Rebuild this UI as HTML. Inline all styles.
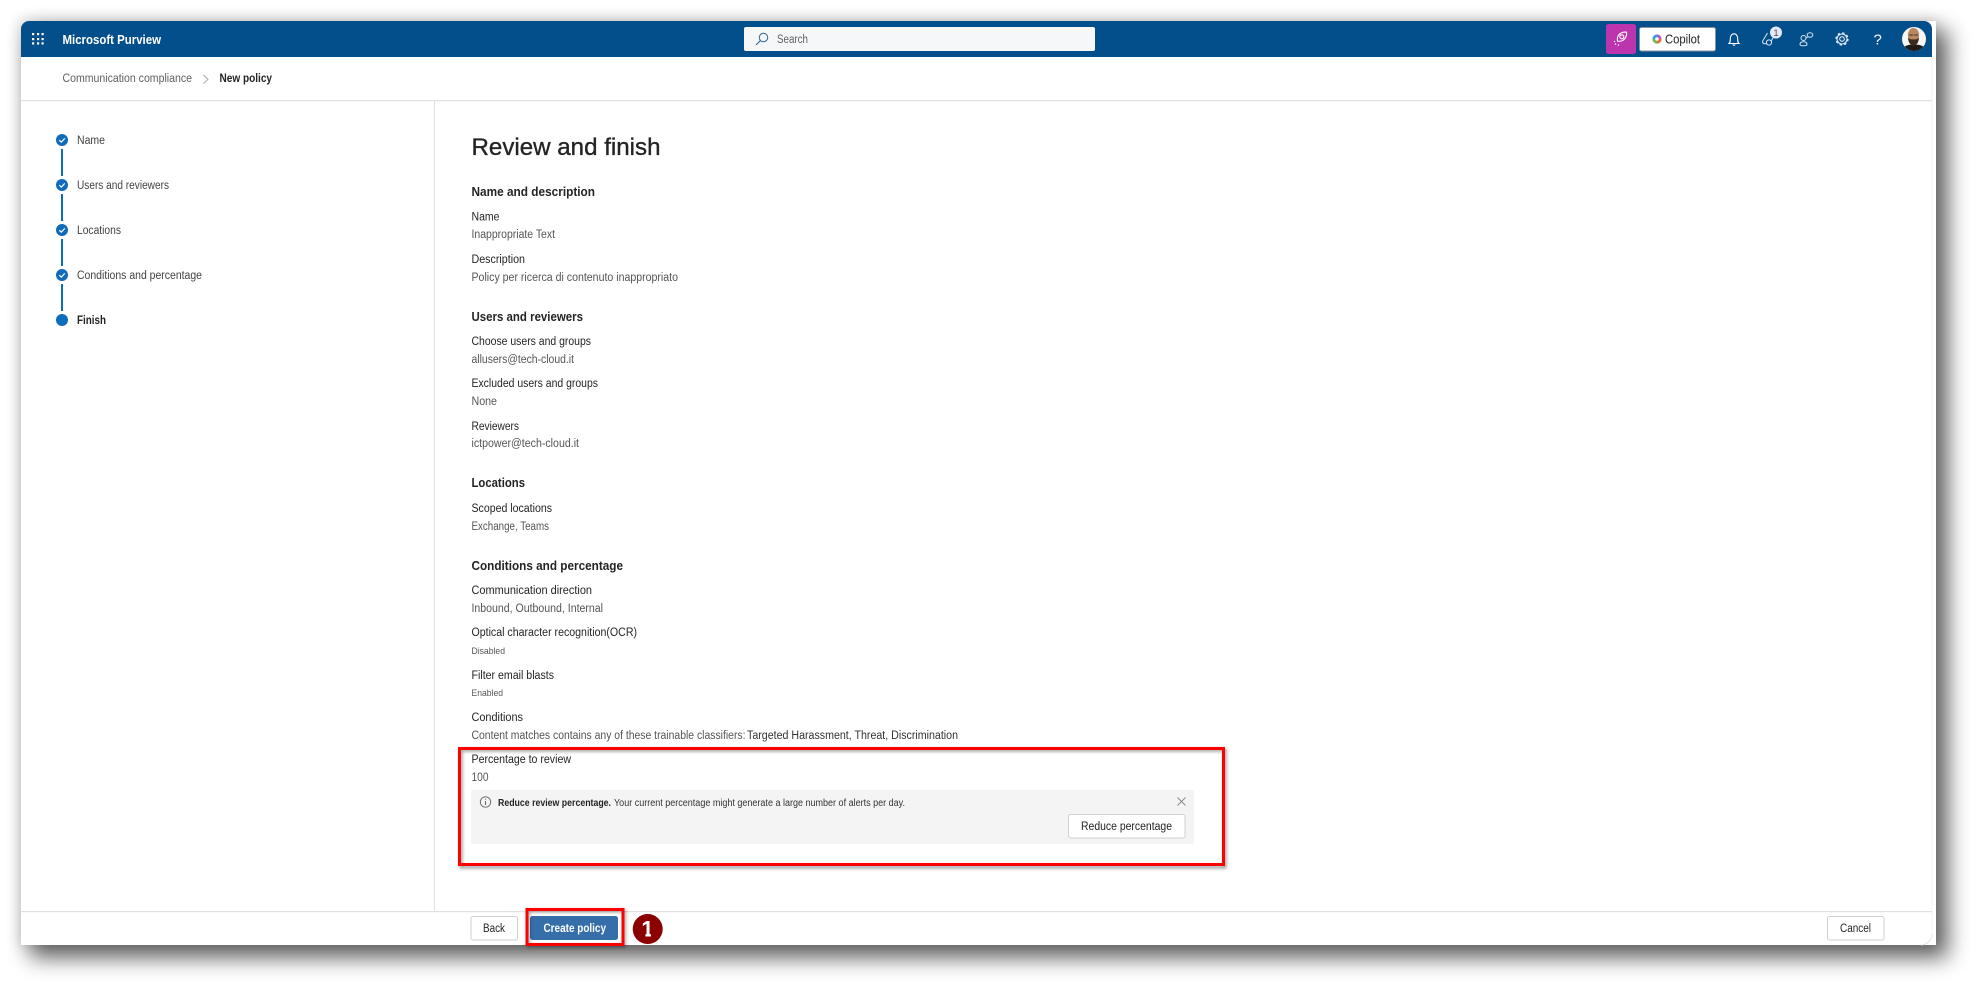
<!DOCTYPE html>
<html lang="en"><head><meta charset="utf-8"><title>Microsoft Purview - New policy</title>
<style>
html,body{margin:0;padding:0;width:1978px;height:988px;overflow:hidden;background:#fff}
svg{position:absolute;left:0;top:0}
text{font-family:"Liberation Sans",sans-serif;font-size:11.5px;fill:#242424}
.v{fill:#555}
.b{font-weight:bold;fill:#242424}
.h{font-weight:bold;font-size:12.5px;fill:#242424}
</style></head><body>
<svg width="1978" height="988" viewBox="0 0 1978 988" xmlns="http://www.w3.org/2000/svg">
<defs>
<filter id="sh" x="-5%" y="-5%" width="110%" height="110%"><feGaussianBlur stdDeviation="11"/></filter>
<filter id="sh2" x="-5%" y="-5%" width="110%" height="110%"><feGaussianBlur stdDeviation="7"/></filter>
<filter id="rs" x="-5%" y="-20%" width="110%" height="140%"><feGaussianBlur stdDeviation="1.6"/></filter>
<clipPath id="av"><circle cx="1914" cy="39" r="12"/></clipPath>
</defs>
<!-- card shadow -->
<rect x="19" y="19" width="1918" height="928" fill="#000" opacity=".12" filter="url(#sh2)"/>
<rect x="30" y="30" width="1918" height="928" fill="#000" opacity=".6" filter="url(#sh)"/>
<!-- card -->
<path d="M21 29a8 8 0 0 1 8-8H1936V945H21Z" fill="#fff"/>
<path d="M1932 934a11 11 0 0 1-11 11" fill="none" stroke="#e4e4e4"/>
<path d="M1932 57V934" stroke="#f1f1f1"/>
<!-- header -->
<path d="M21 57V29a8 8 0 0 1 8-8H1924a8 8 0 0 1 8 8V57Z" fill="#024f8c"/>
<g fill="#fff">
<rect x="32" y="33" width="2.2" height="2.2"/><rect x="37" y="33" width="2.2" height="2.2"/><rect x="41.5" y="33" width="2.2" height="2.2"/>
<rect x="32" y="38" width="2.2" height="2.2"/><rect x="37" y="38" width="2.2" height="2.2"/><rect x="41.5" y="38" width="2.2" height="2.2"/>
<rect x="32" y="42.3" width="2.2" height="2.2"/><rect x="37" y="42.3" width="2.2" height="2.2"/><rect x="41.5" y="42.3" width="2.2" height="2.2"/>
</g>
<text x="62.5" y="44" textLength="98.5" lengthAdjust="spacingAndGlyphs" style="font-weight:bold;font-size:12.5px;fill:#fff">Microsoft Purview</text>
<!-- search -->
<rect x="744" y="27" width="351" height="24" rx="2" fill="#f6f7f8"/>
<circle cx="763.5" cy="37.5" r="4.2" fill="none" stroke="#3f6f9c" stroke-width="1.1"/>
<path d="M760.4 40.6L756 45" stroke="#3f6f9c" stroke-width="1.2"/>
<text x="777" y="43" textLength="31" lengthAdjust="spacingAndGlyphs" style="fill:#616161">Search</text>
<!-- magenta -->
<rect x="1606" y="24" width="30" height="30" rx="2.5" fill="#bd35ae"/>
<g fill="none" stroke="#fff" stroke-width="1.1">
<path d="M1617.5 41c-.9-3 .6-6.5 3.600-8 1.700-.9 4-1.100 5.400-.8.300 1.700-.1 3.700-1 5.400-1.600 3-4.900 4.300-8 3.400Z"/>
<circle cx="1621.800" cy="36.800" r="2"/>
<path d="M1616 43.500l-1.500 1.500M1619 44.500l-1.200 1.200M1615 41l-1 1" stroke-dasharray="1.500 .8"/>
</g>
<!-- copilot -->
<rect x="1639.500" y="27.500" width="76" height="23.500" rx="2" fill="#fff" stroke="#8c9199"/>
<g fill="none" stroke-width="2.800">
<path d="M1653.800 39a3.200 3.200 0 0 1 3.200-3.200" stroke="#2f9fe0"/>
<path d="M1657 35.800a3.200 3.200 0 0 1 3.200 3.200" stroke="#b65ad0"/>
<path d="M1660.200 39a3.200 3.200 0 0 1-3.200 3.200" stroke="#ef6c3b"/>
<path d="M1657 42.200a3.200 3.200 0 0 1-3.200-3.200" stroke="#6fb84a"/>
</g>
<text x="1665" y="43.500" textLength="35" lengthAdjust="spacingAndGlyphs" style="font-size:12.500px;fill:#242424">Copilot</text>
<!-- bell -->
<path d="M1729 43.500c1.300-1.200 1.300-2.500 1.300-4.700 0-3 1.500-5 3.700-5s3.700 2 3.700 5c0 2.200 0 3.500 1.300 4.700Z" fill="none" stroke="#fff" stroke-width="1.100"/>
<path d="M1732.800 44.500a1.300 1.300 0 0 0 2.400 0" fill="none" stroke="#fff"/>
<!-- feedback w badge -->
<path d="M1774 35c-1 3.500-3 7-6 8.500l-4 .200c-1.500-.300-1.800-2-1-3.200l4.500-7.500" fill="none" stroke="#dbe6f2" stroke-width="1"/>
<circle cx="1769" cy="42.500" r="2.600" fill="#024f8c" stroke="#dbe6f2"/>
<circle cx="1776" cy="32.500" r="6" fill="#e3e9f6"/>
<text x="1776" y="36.200" text-anchor="middle" style="font-size:9.500px;fill:#4a4a6a">1</text>
<!-- connect -->
<g fill="none" stroke="#dbe6f2" stroke-width="1">
<circle cx="1803.500" cy="38" r="2.500"/>
<ellipse cx="1810" cy="35" rx="2.800" ry="2.200"/>
<path d="M1800 44.500c0-1.800 1.400-2.700 3.500-2.700s3.500 .9 3.500 2.700c0 1-1.400 1.300-3.500 1.300s-3.500-.3-3.500-1.300Z"/>
<path d="M1806 38l1.800-1"/>
</g>
<!-- gear -->
<circle cx="1842" cy="39" r="2.300" fill="none" stroke="#e6eef6" stroke-width="1.100"/>
<circle cx="1842" cy="39" r="5" fill="none" stroke="#e6eef6" stroke-width="1.100"/>
<circle cx="1842" cy="39" r="6" fill="none" stroke="#e6eef6" stroke-width="1.300" stroke-dasharray="2.360 2.350"/>
<!-- help -->
<text x="1877.700" y="44.500" text-anchor="middle" style="font-size:15px;fill:#fff">?</text>
<!-- avatar -->
<circle cx="1914" cy="39" r="12" fill="#f8f6f3"/>
<g clip-path="url(#av)">
<path d="M1902 52c1-6 5-7.500 12-7.500s11 1.500 12 7.500Z" fill="#1d1a18"/>
<ellipse cx="1913.500" cy="35" rx="5.600" ry="7" fill="#b98660"/>
<path d="M1908 37.500c.2 5 2.500 8 5.500 8s5.300-3 5.500-8c-1 1.500-2.800 2-5.500 2s-4.500-.5-5.500-2Z" fill="#3a2a20"/>
<path d="M1909.500 35h3.300M1914.300 35h3.300" stroke="#2b2b2b" stroke-width="1"/>
</g>
<!-- breadcrumb -->
<text x="62.500" y="82" textLength="129.500" lengthAdjust="spacingAndGlyphs" style="fill:#616161">Communication compliance</text>
<path d="M203.500 75l4.500 4.300-4.500 4.300" fill="none" stroke="#a8a8a8"/>
<text x="219.500" y="82" textLength="52.500" lengthAdjust="spacingAndGlyphs" class="b">New policy</text>
<rect x="21" y="100" width="1911" height="1.200" fill="#e1e1e1"/>
<rect x="434" y="100" width="1" height="811" fill="#e1e1e1"/>
<rect x="21" y="911" width="1911" height="1.200" fill="#e1e1e1"/>
<!-- stepper -->
<g fill="#0f6cbd">
<rect x="61" y="149" width="2" height="27"/><rect x="61" y="194" width="2" height="27"/><rect x="61" y="239" width="2" height="27"/><rect x="61" y="284" width="2" height="27"/>
<circle cx="62" cy="140" r="6"/><circle cx="62" cy="185" r="6"/><circle cx="62" cy="230" r="6"/><circle cx="62" cy="275" r="6"/><circle cx="62" cy="320" r="6"/>
</g>
<g fill="none" stroke="#fff" stroke-width="1.200">
<path d="M59.300 140.200l2 1.900 3.500-3.700"/><path d="M59.300 185.200l2 1.900 3.500-3.700"/><path d="M59.300 230.200l2 1.900 3.500-3.700"/><path d="M59.300 275.200l2 1.900 3.500-3.700"/>
</g>
<text x="77" y="144" textLength="28" lengthAdjust="spacingAndGlyphs" style="fill:#424242">Name</text>
<text x="77" y="189" textLength="92" lengthAdjust="spacingAndGlyphs" style="fill:#424242">Users and reviewers</text>
<text x="77" y="234" textLength="44" lengthAdjust="spacingAndGlyphs" style="fill:#424242">Locations</text>
<text x="77" y="279" textLength="125" lengthAdjust="spacingAndGlyphs" style="fill:#424242">Conditions and percentage</text>
<text x="77" y="324" textLength="29" lengthAdjust="spacingAndGlyphs" class="b">Finish</text>
<!-- main -->
<text x="471.500" y="155" textLength="189" lengthAdjust="spacingAndGlyphs" style="font-size:24px;fill:#242424;stroke:#242424;stroke-width:.35">Review and finish</text>
<text x="471.500" y="196" textLength="123.500" lengthAdjust="spacingAndGlyphs" class="h">Name and description</text>
<text x="471.500" y="220.500" textLength="28" lengthAdjust="spacingAndGlyphs">Name</text>
<text x="471.500" y="238" textLength="83.500" lengthAdjust="spacingAndGlyphs" class="v">Inappropriate Text</text>
<text x="471.500" y="263" textLength="53.500" lengthAdjust="spacingAndGlyphs">Description</text>
<text x="471.500" y="281" textLength="206.500" lengthAdjust="spacingAndGlyphs" class="v">Policy per ricerca di contenuto inappropriato</text>
<text x="471.500" y="321" textLength="111.500" lengthAdjust="spacingAndGlyphs" class="h">Users and reviewers</text>
<text x="471.500" y="345" textLength="119.500" lengthAdjust="spacingAndGlyphs">Choose users and groups</text>
<text x="471.500" y="363" textLength="102.500" lengthAdjust="spacingAndGlyphs" class="v">allusers@tech-cloud.it</text>
<text x="471.500" y="387" textLength="126.500" lengthAdjust="spacingAndGlyphs">Excluded users and groups</text>
<text x="471.500" y="405" textLength="25.500" lengthAdjust="spacingAndGlyphs" class="v">None</text>
<text x="471.500" y="430" textLength="47.500" lengthAdjust="spacingAndGlyphs">Reviewers</text>
<text x="471.500" y="447" textLength="107.500" lengthAdjust="spacingAndGlyphs" class="v">ictpower@tech-cloud.it</text>
<text x="471.500" y="487" textLength="53.500" lengthAdjust="spacingAndGlyphs" class="h">Locations</text>
<text x="471.500" y="512" textLength="80.500" lengthAdjust="spacingAndGlyphs">Scoped locations</text>
<text x="471.500" y="530" textLength="77.500" lengthAdjust="spacingAndGlyphs" class="v">Exchange, Teams</text>
<text x="471.500" y="570" textLength="151.500" lengthAdjust="spacingAndGlyphs" class="h">Conditions and percentage</text>
<text x="471.500" y="594" textLength="120.500" lengthAdjust="spacingAndGlyphs">Communication direction</text>
<text x="471.500" y="612" textLength="131.500" lengthAdjust="spacingAndGlyphs" class="v">Inbound, Outbound, Internal</text>
<text x="471.500" y="636" textLength="165.500" lengthAdjust="spacingAndGlyphs">Optical character recognition(OCR)</text>
<text x="471.500" y="654" textLength="33.500" lengthAdjust="spacingAndGlyphs" style="font-size:9.500px;fill:#555">Disabled</text>
<text x="471.500" y="679" textLength="82.500" lengthAdjust="spacingAndGlyphs">Filter email blasts</text>
<text x="471.500" y="696" textLength="31.500" lengthAdjust="spacingAndGlyphs" style="font-size:9.500px;fill:#555">Enabled</text>
<text x="471.500" y="721" textLength="51.500" lengthAdjust="spacingAndGlyphs">Conditions</text>
<text x="471.500" y="739" textLength="274" lengthAdjust="spacingAndGlyphs" class="v">Content matches contains any of these trainable classifiers:</text>
<text x="747" y="739" textLength="211" lengthAdjust="spacingAndGlyphs" style="fill:#333">Targeted Harassment, Threat, Discrimination</text>
<text x="471.500" y="763" textLength="99.500" lengthAdjust="spacingAndGlyphs">Percentage to review</text>
<text x="471.500" y="781" textLength="17" lengthAdjust="spacingAndGlyphs" class="v">100</text>
<!-- alert -->
<rect x="471" y="790" width="723" height="54" rx="2" fill="#f4f4f4"/>
<circle cx="485.500" cy="802" r="5.200" fill="none" stroke="#666" stroke-width=".9"/>
<path d="M485.500 801v4M485.500 798.700v1" stroke="#666"/>
<text x="498" y="806" textLength="113" lengthAdjust="spacingAndGlyphs" style="font-weight:bold;font-size:10px;fill:#242424">Reduce review percentage.</text>
<text x="614" y="806" textLength="291" lengthAdjust="spacingAndGlyphs" style="font-size:10px;fill:#333">Your current percentage might generate a large number of alerts per day.</text>
<path d="M1177.500 797.500l8 8M1185.500 797.500l-8 8" stroke="#8a8a8a" fill="none"/>
<rect x="1068.500" y="814.500" width="116.500" height="23.500" rx="2" fill="#fff" stroke="#d1d1d1"/>
<text x="1081" y="830" textLength="91" lengthAdjust="spacingAndGlyphs">Reduce percentage</text>
<!-- red box -->
<rect x="459.500" y="748.500" width="764" height="117" fill="none" stroke="#000" stroke-width="3" opacity=".4" filter="url(#rs)" transform="translate(1.500 1.500)"/>
<rect x="459.500" y="748.500" width="764" height="116" fill="none" stroke="#f00" stroke-width="3"/>
<!-- footer -->
<rect x="471" y="916.500" width="46.500" height="23.500" rx="2" fill="#fff" stroke="#d1d1d1"/>
<text x="483" y="932" textLength="22" lengthAdjust="spacingAndGlyphs">Back</text>
<rect x="530" y="916" width="88" height="24" rx="2.500" fill="#356ea9"/>
<text x="543.500" y="932" textLength="62.500" lengthAdjust="spacingAndGlyphs" style="font-weight:bold;fill:#fff">Create policy</text>
<rect x="527" y="909.500" width="96" height="35" fill="none" stroke="#000" stroke-width="3" opacity=".35" filter="url(#rs)" transform="translate(1.500 1.500)"/>
<rect x="527" y="909.500" width="96" height="35" fill="none" stroke="#f00" stroke-width="3"/>
<circle cx="647.700" cy="929" r="15" fill="#8b0000"/>
<text x="647.500" y="936.500" text-anchor="middle" style="font-weight:bold;font-size:22px;fill:#fff">1</text>
<rect x="638" y="933.800" width="7.400" height="4" fill="#8b0000"/><rect x="651" y="933.800" width="7" height="4" fill="#8b0000"/>
<rect x="1827.500" y="916.500" width="56.500" height="23.500" rx="2" fill="#fff" stroke="#d1d1d1"/>
<text x="1840" y="932" textLength="31" lengthAdjust="spacingAndGlyphs">Cancel</text>
</svg>
</body></html>
